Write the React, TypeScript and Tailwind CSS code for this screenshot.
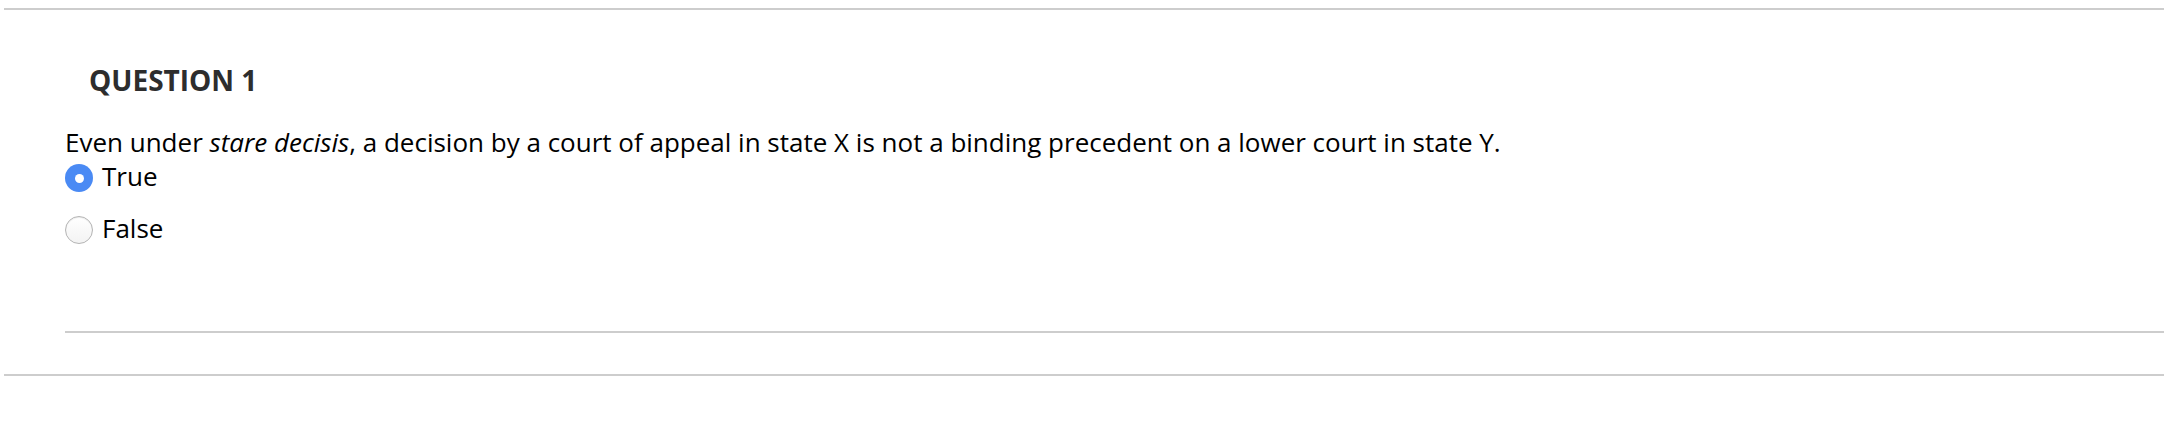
import React from 'react';

const font = { fontFamily: '"Open Sans", "Noto Sans", Arial, sans-serif' };

const Radio: React.FC<{ checked?: boolean }> = ({ checked }) =>
    checked ? (
        <span className="mt-[5px] flex h-[28px] w-[28px] shrink-0 items-center justify-center rounded-full bg-[#4a8af4]">
            <span className="h-[9px] w-[9px] rounded-full bg-white" />
        </span>
    ) : (
        <span className="mt-[5px] h-[28px] w-[28px] shrink-0 rounded-full border-[1.5px] border-[#b4b4b4] bg-gradient-to-b from-white to-[#f3f3f3] shadow-[inset_0_1px_1px_rgba(0,0,0,0.08)]" />
    );

const Option: React.FC<{ label: string; checked?: boolean }> = ({ label, checked }) => (
    <label className="flex items-start gap-[9px]">
        <Radio checked={checked} />
        <span className="text-[26px] leading-[34px] text-black">{label}</span>
    </label>
);

export default function App() {
    return (
        <div className="h-[430px] w-full overflow-hidden bg-white pt-[8px] pl-[4px]" style={font}>
            <div className="h-[2px] bg-[#cdcdcd]" />

            {/* Question block */}
            <div className="pl-[61px]">
                <h2 className="mt-[51px] pl-[24px] text-[28px] font-bold leading-[38px] text-[#2d2d2d]">QUESTION 1</h2>

                <p className="mt-[26px] text-[26px] leading-[34px] text-black">
                    Even under <em>stare decisis</em>, a decision by a court of appeal in state X is not a binding precedent on a lower court in state Y.
                </p>

                <div className="flex flex-col gap-[18px]">
                    <Option label="True" checked />
                    <Option label="False" />
                </div>

                <div className="mt-[86px] h-[2px] bg-[#cdcdcd]" />
            </div>

            <div className="mt-[41px] h-[2px] bg-[#cdcdcd]" />
        </div>
    );
}
